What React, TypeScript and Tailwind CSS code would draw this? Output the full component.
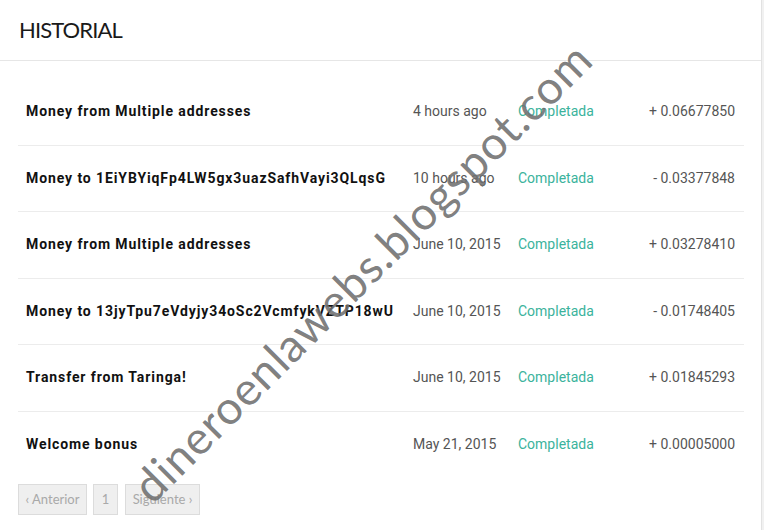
import React from "react";

type Movement = {
  id: number;
  title: string;
  when: string;
  status: string;
  amount: string;
};

const movements: Movement[] = [
  { id: 1, title: "Money from Multiple addresses", when: "4 hours ago", status: "Completada", amount: "+ 0.06677850" },
  { id: 2, title: "Money to 1EiYBYiqFp4LW5gx3uazSafhVayi3QLqsG", when: "10 hours ago", status: "Completada", amount: "- 0.03377848" },
  { id: 3, title: "Money from Multiple addresses", when: "June 10, 2015", status: "Completada", amount: "+ 0.03278410" },
  { id: 4, title: "Money to 13jyTpu7eVdyjy34oSc2VcmfykVZTP18wU", when: "June 10, 2015", status: "Completada", amount: "- 0.01748405" },
  { id: 5, title: "Transfer from Taringa!", when: "June 10, 2015", status: "Completada", amount: "+ 0.01845293" },
  { id: 6, title: "Welcome bonus", when: "May 21, 2015", status: "Completada", amount: "+ 0.00005000" },
];

const App: React.FC = () => {
  return (
    <div className="relative h-[530px] w-[764px] overflow-hidden bg-[#f1f1f1]">
      <div className="h-full w-[762px] border-r border-[#e2e2e2] bg-white">
        {/* Header */}
        <div className="flex h-[61px] items-center border-b border-[#e6e6e6] px-[19px] pb-[2px]">
          <h1 className="font-['Lato',sans-serif] text-[22px] font-normal tracking-[-0.9px] text-[#1a1a1a]">
            HISTORIAL
          </h1>
        </div>

        {/* Movements */}
        <div className="pl-[18px] pr-[17px] pt-[18px]">
          {movements.map((m, index) => (
            <div
              key={m.id}
              className={`grid h-[66.5px] grid-cols-[387px_105px_1fr_auto] items-center pl-[8px] pr-[9px] font-['Roboto',sans-serif] text-[14px] ${
                index < movements.length - 1 ? "border-b border-[#ececec]" : ""
              }`}
            >
              <div className="whitespace-nowrap font-bold tracking-[0.9px] text-[#111]">{m.title}</div>
              <div className="text-[#555]">{m.when}</div>
              <div className="text-[#3bb39c]">{m.status}</div>
              <div className="text-right text-[#555]">{m.amount}</div>
            </div>
          ))}

          {/* Pagination */}
          <div className="mt-[6px] flex gap-[6px] font-['Lato',sans-serif] text-[13px] text-[#a9a9a9]">
            <span className="flex h-[31px] w-[69px] items-center justify-center border border-[#dcdcdc] bg-[#efefef]">
              ‹ Anterior
            </span>
            <span className="flex h-[31px] w-[25px] items-center justify-center border border-[#dcdcdc] bg-[#efefef]">
              1
            </span>
            <span className="ml-[1px] flex h-[31px] w-[75px] items-center justify-center border border-[#dcdcdc] bg-[#efefef]">
              Siguiente ›
            </span>
          </div>
        </div>
      </div>

      {/* Watermark */}
      <div className="pointer-events-none absolute left-[362px] top-[272px] -translate-x-1/2 -translate-y-1/2 -rotate-45 whitespace-nowrap font-['Lato',sans-serif] text-[46px] leading-none tracking-[1px] text-[#707070]/90">
        dineroenlawebs.blogspot.com
      </div>
    </div>
  );
};

export default App;
